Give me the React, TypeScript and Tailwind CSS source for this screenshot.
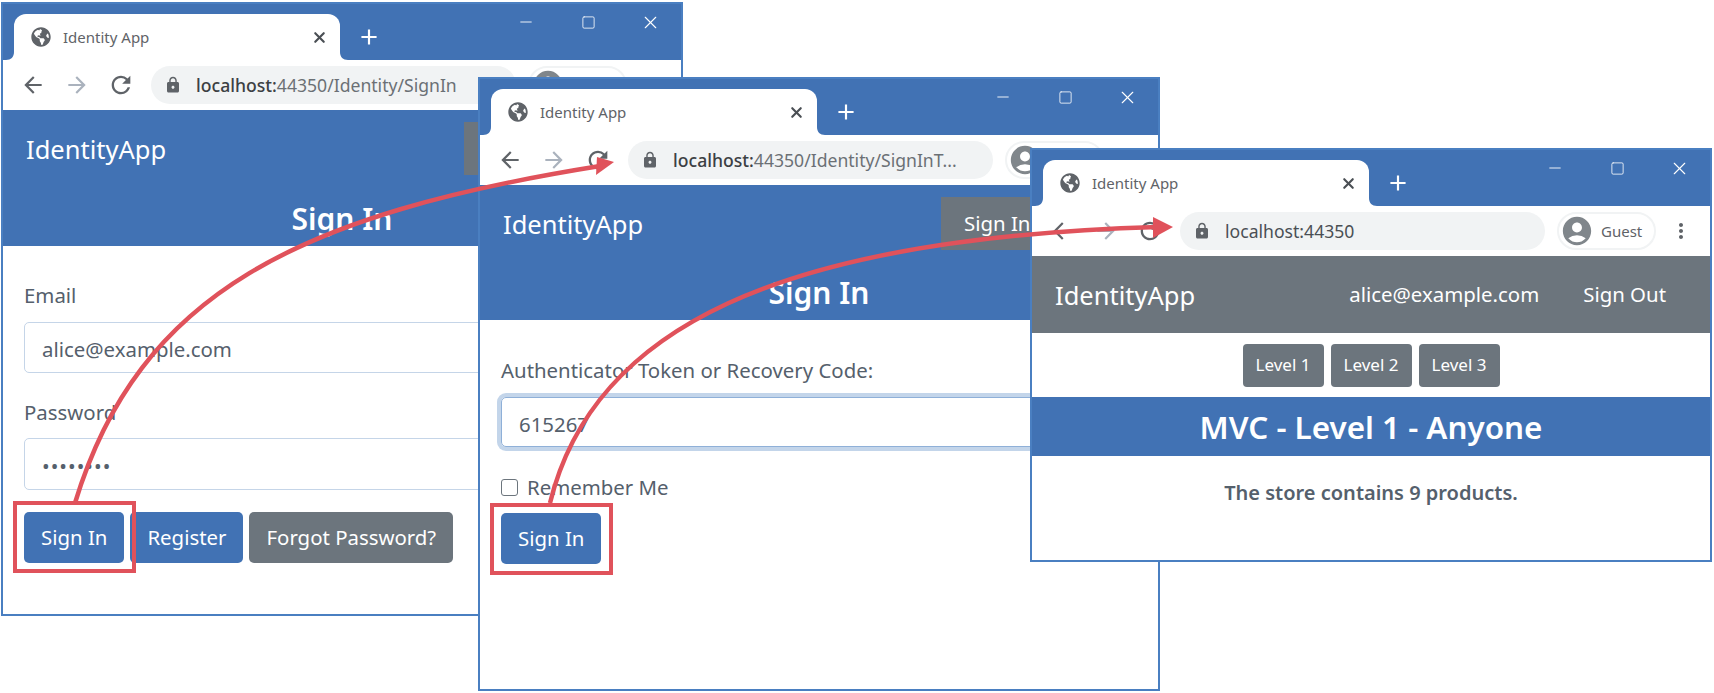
import { MdAccountCircle, MdAdd, MdArrowBack, MdArrowForward, MdLock, MdMoreVert, MdRefresh } from "react-icons/md";
import { FaGlobeAmericas } from "react-icons/fa";
import { Minus, Square, X } from "lucide-react";

const red = "#e0525b";

function Chrome({ url, boldPart, plain }: { url: string; boldPart: string; plain?: boolean }) {
    return (
        <>
            <div className="relative h-[56px] shrink-0 bg-[#4172b4] pt-[10px] pl-[11px]">
                <div className="relative flex h-[46px] w-[326px] items-center rounded-t-[12px] bg-white pl-[17px] pr-[12px] text-[#5f6368]">
                    <svg className="absolute bottom-0 -left-[8px]" width="8" height="8" viewBox="0 0 8 8">
                        <path d="M8 0V8H0C5 8 8 5 8 0Z" fill="#ffffff" />
                    </svg>
                    <svg className="absolute bottom-0 -right-[8px]" width="8" height="8" viewBox="0 0 8 8">
                        <path d="M0 0V8H8C3 8 0 5 0 0Z" fill="#ffffff" />
                    </svg>
                    <FaGlobeAmericas size={20} className="shrink-0" />
                    <span className="ml-[12px] text-[15px]">Identity App</span>
                    <X size={17} strokeWidth={3} className="ml-auto text-[#4a4f54]" />
                </div>
                <MdAdd size={26} className="absolute left-[353px] top-[20px] text-white" />
                <div className="absolute right-0 top-0 flex h-[36px] text-white">
                    <div className="flex w-[62px] items-center justify-center"><Minus size={18} strokeWidth={1.2} /></div>
                    <div className="flex w-[62px] items-center justify-center"><Square size={15} strokeWidth={1.3} /></div>
                    <div className="flex w-[62px] items-center justify-center"><X size={21} strokeWidth={1.3} /></div>
                </div>
            </div>
            <div className="flex h-[50px] shrink-0 items-center bg-white pl-[8px]">
                <div className="flex w-[44px] justify-center text-[#5f6368]"><MdArrowBack size={26} /></div>
                <div className="flex w-[44px] justify-center text-[#aab2bd]"><MdArrowForward size={26} /></div>
                <div className="flex w-[44px] justify-center text-[#5f6368]"><MdRefresh size={28} /></div>
                <div className="ml-[8px] flex h-[38px] w-[365px] shrink-0 items-center rounded-full bg-[#f1f3f4] pl-[13px]">
                    <MdLock size={18} className="shrink-0 text-[#5f6368]" />
                    <span className="ml-[14px] text-[17.6px] text-[#4a4f54]">
                        <span className={plain ? "" : "font-medium text-[#3c4043]"}>{boldPart}</span>
                        <span className={plain ? "" : "text-[#6b7075]"}>{url}</span>
                    </span>
                </div>
                <div className="ml-[12px] flex h-[38px] w-[99px] shrink-0 items-center rounded-full border-2 border-[#f1f3f4] pl-[1px]">
                    <MdAccountCircle size={34} className="shrink-0 text-[#80868b]" />
                    <span className="ml-[7px] text-[15px] text-[#5f6368]">Guest</span>
                </div>
                <div className="ml-[13px] flex w-[24px] justify-center text-[#5f6368]"><MdMoreVert size={24} /></div>
            </div>
        </>
    );
}

function FormButton({ label, gray }: { label: string; gray?: boolean }) {
    return (
        <div className={`flex h-[51px] items-center rounded-[5px] px-[17px] text-[20.4px] text-white ${gray ? "bg-[#6c757d]" : "bg-[#4172b4]"}`}>
            {label}
        </div>
    );
}

function SignInWindow() {
    return (
        <div className="absolute left-[1px] top-[2px] z-10 flex h-[614px] w-[682px] flex-col overflow-hidden border-2 border-[#4a7fc1] bg-white">
            <Chrome boldPart="localhost:" url="44350/Identity/SignIn" />
            <div className="flex h-[76px] shrink-0 items-center bg-[#4172b4] pl-[23px] text-white">
                <span className="pt-[3px] text-[25.5px]">IdentityApp</span>
                <div className="ml-auto mr-[19px] flex h-[53px] w-[198px] items-center bg-[#6c757d] pl-[23px] text-[20.4px]">Sign In</div>
            </div>
            <div className="flex h-[60px] shrink-0 items-center justify-center bg-[#4172b4] pt-[4px] text-[30px] font-semibold text-white">Sign In</div>
            <div className="flex flex-col px-[21px] pt-[35px] text-[20.4px] text-[#55606c]">
                <div className="h-[28px] leading-[28px]">Email</div>
                <div className="mt-[13px] flex h-[51px] items-center rounded-[5px] border border-[#c5d5e8] px-[17px] pt-[3px]">alice@example.com</div>
                <div className="mt-[25px] h-[28px] leading-[28px]">Password</div>
                <div className="mt-[12px] flex h-[52px] items-center rounded-[5px] border border-[#c5d5e8] px-[17px] pt-[5px] tracking-[1px]">••••••••</div>
                <div className="mt-[22px] flex gap-[6px]">
                    <FormButton label="Sign In" />
                    <FormButton label="Register" />
                    <FormButton label="Forgot Password?" gray />
                </div>
            </div>
        </div>
    );
}

function TokenWindow() {
    return (
        <div className="absolute left-[478px] top-[77px] z-20 flex h-[614px] w-[682px] flex-col overflow-hidden border-2 border-[#4a7fc1] bg-white">
            <Chrome boldPart="localhost:" url="44350/Identity/SignInT..." />
            <div className="flex h-[76px] shrink-0 items-center bg-[#4172b4] pl-[23px] text-white">
                <span className="pt-[3px] text-[25.5px]">IdentityApp</span>
                <div className="ml-auto mr-[19px] flex h-[53px] w-[198px] items-center bg-[#6c757d] pl-[23px] text-[20.4px]">Sign In</div>
            </div>
            <div className="flex h-[59px] shrink-0 items-center justify-center bg-[#4172b4] pt-[3px] text-[30px] font-semibold text-white">Sign In</div>
            <div className="flex flex-col px-[21px] pt-[36px] text-[20.4px] text-[#55606c]">
                <div className="h-[28px] leading-[28px]">Authenticator Token or Recovery Code:</div>
                <div className="mt-[13px] flex h-[50px] items-center rounded-[5px] border border-[#8fb0d8] px-[17px] pt-[4px] ring-4 ring-[#c3d5ea]">615267</div>
                <div className="mt-[26px] flex h-[28px] items-center">
                    <div className="h-[17px] w-[17px] rounded-[3px] border border-[#6c757d] bg-white"></div>
                    <span className="ml-[9px]">Remember Me</span>
                </div>
                <div className="mt-[12px] flex">
                    <FormButton label="Sign In" />
                </div>
            </div>
        </div>
    );
}

function HomeWindow() {
    return (
        <div className="absolute left-[1030px] top-[148px] z-30 flex h-[414px] w-[682px] flex-col overflow-hidden border-2 border-[#4a7fc1] bg-white">
            <Chrome boldPart="localhost:" url="44350" plain />
            <div className="flex h-[77px] shrink-0 items-center bg-[#6c757d] pl-[23px] pr-[22px] text-white">
                <span className="pt-[2px] text-[25.5px]">IdentityApp</span>
                <div className="ml-auto flex text-[20.4px]">
                    <span className="px-[22px]">alice@example.com</span>
                    <span className="px-[22px]">Sign Out</span>
                </div>
            </div>
            <div className="flex h-[64px] shrink-0 items-center justify-center gap-[7px]">
                {["Level 1", "Level 2", "Level 3"].map((level) => (
                    <div key={level} className="flex h-[43px] w-[81px] items-center justify-center rounded-[4px] bg-[#6c757d] text-[17px] text-white">
                        {level}
                    </div>
                ))}
            </div>
            <div className="flex h-[59px] shrink-0 items-center justify-center bg-[#4172b4] text-[31.4px] font-semibold text-white">MVC - Level 1 - Anyone</div>
            <div className="pt-[22px] text-center text-[20px] font-semibold leading-[30px] text-[#55606c]">The store contains 9 products.</div>
        </div>
    );
}

export default function App() {
    return (
        <div className="relative h-[693px] w-[1714px] overflow-hidden bg-white font-['Noto_Sans',sans-serif]">
            <SignInWindow />
            <TokenWindow />
            <HomeWindow />
            <div className="absolute left-[13px] top-[501px] z-40 h-[72px] w-[123px] border-4 border-[#e0525b]"></div>
            <div className="absolute left-[490px] top-[503px] z-40 h-[72px] w-[123px] border-4 border-[#e0525b]"></div>
            <svg className="absolute left-0 top-0 z-50" width="1714" height="693" viewBox="0 0 1714 693" fill="none">
                <path d="M75 503C139 292 300 214 600 166" stroke={red} strokeWidth="4.5" />
                <polygon points="614,162 597,157 596,175" fill={red} />
                <path d="M550 503C593 328 778 238 1158 227" stroke={red} strokeWidth="4.5" />
                <polygon points="1173,227 1153,217 1153,238" fill={red} />
            </svg>
        </div>
    );
}
